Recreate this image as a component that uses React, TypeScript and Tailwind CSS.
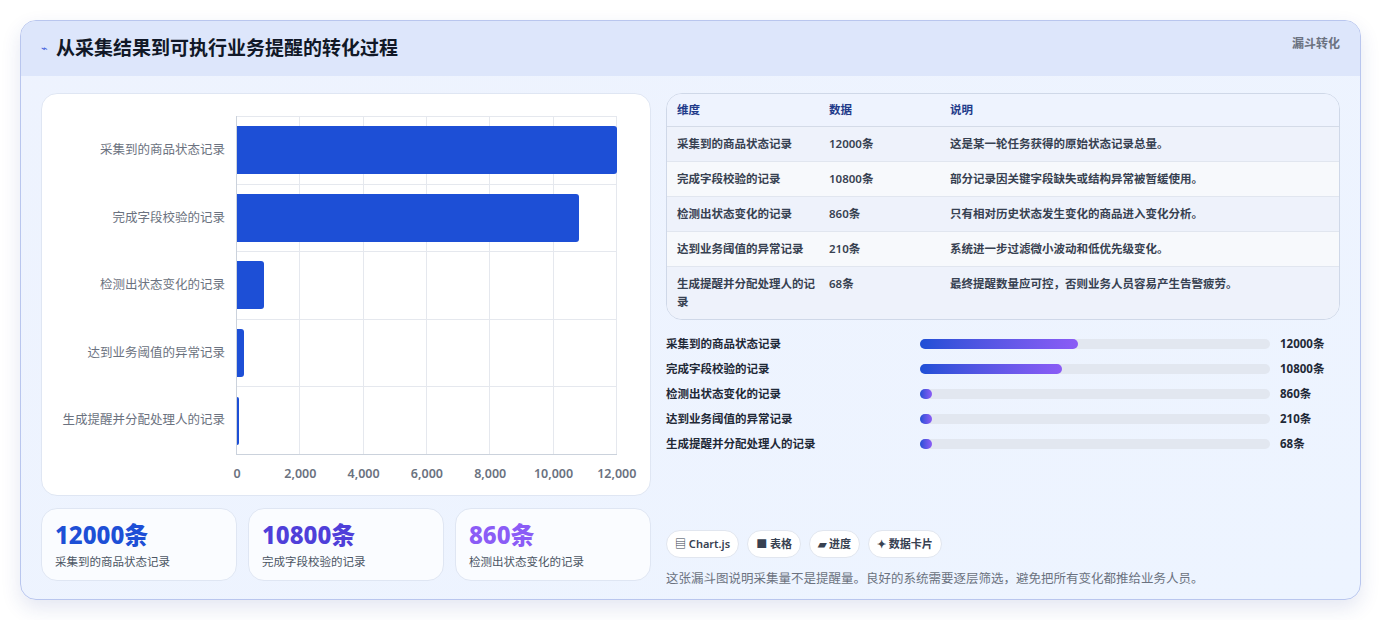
import React from "react";

const rows = [
  { n: "采集到的商品状态记录", v: 12000, d: "这是某一轮任务获得的原始状态记录总量。" },
  { n: "完成字段校验的记录", v: 10800, d: "部分记录因关键字段缺失或结构异常被暂缓使用。" },
  { n: "检测出状态变化的记录", v: 860, d: "只有相对历史状态发生变化的商品进入变化分析。" },
  { n: "达到业务阈值的异常记录", v: 210, d: "系统进一步过滤微小波动和低优先级变化。" },
  { n: "生成提醒并分配处理人的记录", v: 68, d: "最终提醒数量应可控，否则业务人员容易产生告警疲劳。" },
];
const prog = [158, 142, 12, 12, 12];
const ticks = ["0", "2,000", "4,000", "6,000", "8,000", "10,000", "12,000"];

export default function App() {
  const font = { fontFamily: '"Noto Sans", "Noto Sans CJK SC", sans-serif' };
  return (
    <div className="w-[1381px] h-[620px] bg-white p-5 pt-5" style={font}>
      <div className="h-[580px] rounded-2xl border border-[#b9c6ee] bg-gradient-to-br from-[#eef3fe] to-[#edf4ff] overflow-hidden shadow-[0_8px_20px_rgba(30,60,150,0.12)]">
        <div className="h-[55px] bg-[#dde6fb] flex items-center justify-between px-5">
          <div className="flex items-center gap-2">
            <span className="text-[#3b5bdb] text-[11px]">⌁</span>
            <span className="text-[19px] font-bold text-[#111827]">从采集结果到可执行业务提醒的转化过程</span>
          </div>
          <span className="self-start mt-[14px] text-[12px] font-bold text-[#6b7280]">漏斗转化</span>
        </div>
        <div className="flex gap-[15px] px-5 pt-[17px]">
          <div className="w-[610px] flex flex-col gap-[12px]">
            <div className="h-[403px] bg-white rounded-2xl border border-[#dfe6f3] relative">
              <div className="absolute left-[194px] top-[22px] w-[381px] h-[339px] border-l border-b border-[#cbd2dc]">
                <div className="absolute inset-0 grid grid-cols-6">
                  {[0, 1, 2, 3, 4, 5].map((i) => (
                    <div key={i} className="border-r border-[#e5e8ee]" />
                  ))}
                </div>
                <div className="absolute inset-0 flex flex-col">
                  {rows.map((r, i) => (
                    <div key={i} className="flex-1 flex items-center border-t border-[#e5e8ee] relative">
                      <div className="h-[48px] bg-[#1d4fd6] rounded-r-[3px]" style={{ width: Math.max(2, (r.v / 12000) * 380) }} />
                      <div className="absolute right-[392px] w-[200px] text-right text-[12.5px] text-[#6b7280] whitespace-nowrap">{r.n}</div>
                    </div>
                  ))}
                </div>
                <div className="absolute left-0 right-0 top-[349px]">
                  {ticks.map((t, i) => (
                    <span key={i} className="absolute -translate-x-1/2 text-[12.5px] font-semibold text-[#6b7280]" style={{ left: i * 63.3 }}>{t}</span>
                  ))}
                </div>
              </div>
            </div>
            <div className="grid grid-cols-3 gap-[11px]">
              {[
                ["12000条", "采集到的商品状态记录", "text-[#1d4fd6]"],
                ["10800条", "完成字段校验的记录", "text-[#4f3fd9]"],
                ["860条", "检测出状态变化的记录", "text-[#8b5cf6]"],
              ].map(([a, b, c], i) => (
                <div key={i} className="h-[73px] rounded-2xl bg-[#fafcff] border border-[#dfe6f3] px-[13px] pt-[10px]">
                  <div className={`text-[24px] font-extrabold leading-[32px] ${c}`}>{a}</div>
                  <div className="text-[11.5px] text-[#4b5563] mt-[2px]">{b}</div>
                </div>
              ))}
            </div>
          </div>
          <div className="flex-1 flex flex-col">
            <div className="rounded-2xl border border-[#cfd8e8] overflow-hidden text-[11.5px] bg-[#f5f8ff]">
              <div className="flex h-[33px] items-center font-bold text-[#1e3a8a] border-b border-[#d4dbe8] bg-[#eef3fe]">
                <div className="w-[162px] pl-[10px]">维度</div>
                <div className="w-[121px]">数据</div>
                <div>说明</div>
              </div>
              {rows.map((r, i) => (
                <div key={i} className={`flex py-[8px] font-semibold text-[#374151] ${i < 4 ? "border-b border-[#e1e6ef]" : ""} ${i % 2 ? "bg-[#f7f9fc]" : "bg-[#eef2fb]"}`}>
                  <div className="w-[162px] pl-[10px] pr-2 leading-[18px]">{r.n}</div>
                  <div className="w-[121px] leading-[18px]">{r.v}条</div>
                  <div className="leading-[18px]">{r.d}</div>
                </div>
              ))}
            </div>
            <div className="mt-[11px] flex flex-col">
              {rows.map((r, i) => (
                <div key={i} className="h-[25px] flex items-center text-[11.5px] font-semibold text-[#1f2937]">
                  <div className="w-[254px]">{r.n}</div>
                  <div className="w-[350px] h-[10px] rounded-full bg-[#e2e7f0]">
                    <div className="h-full rounded-full bg-gradient-to-r from-[#1d4fd6] to-[#8b5cf6]" style={{ width: prog[i] }} />
                  </div>
                  <div className="ml-[10px] font-bold">{r.v}条</div>
                </div>
              ))}
            </div>
            <div className="mt-[74px] flex gap-[8px] text-[11px] font-semibold text-[#374151]">
              {["▤ Chart.js", "■ 表格", "▰ 进度", "✦ 数据卡片"].map((c) => (
                <span key={c} className="h-[28px] px-[8px] flex items-center rounded-full bg-white border border-[#e1e6ef]">{c}</span>
              ))}
            </div>
            <div className="mt-[12px] text-[12.5px] text-[#6b7280]">这张漏斗图说明采集量不是提醒量。良好的系统需要逐层筛选，避免把所有变化都推给业务人员。</div>
          </div>
        </div>
      </div>
    </div>
  );
}
